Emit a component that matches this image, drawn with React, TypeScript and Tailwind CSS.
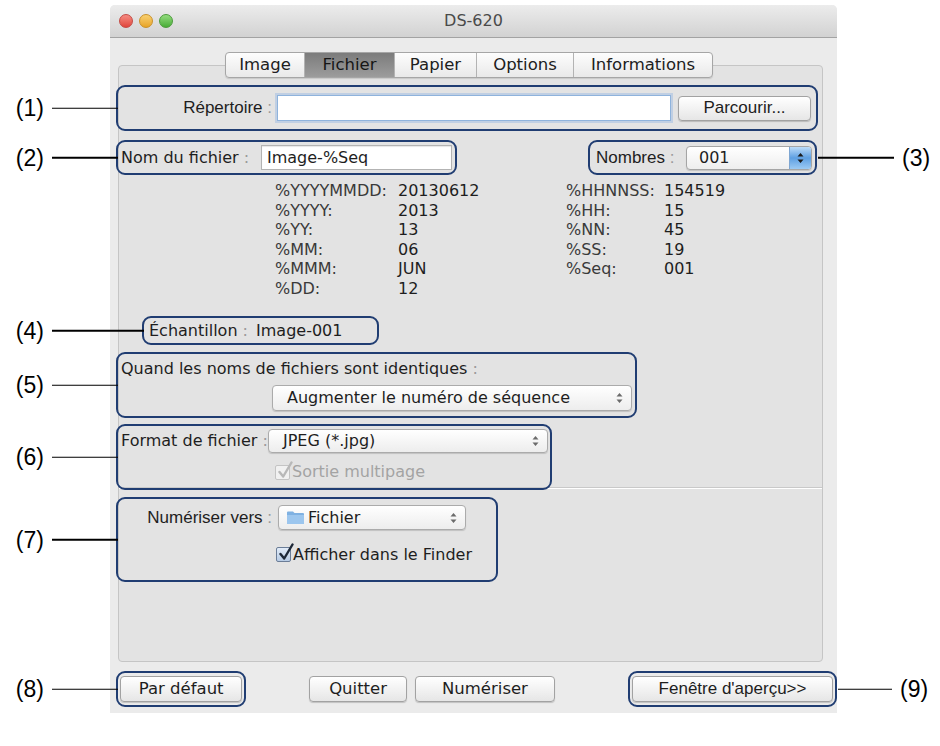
import React from 'react';

const lucida = "font-['DejaVu_Sans',sans-serif]";
const helv = "font-['Liberation_Sans',Arial,sans-serif]";

type CalloutProps = {
  n: number;
  side?: 'left' | 'right';
  lineClass: string;
  className?: string;
  children: React.ReactNode;
};

function Callout({ n, side = 'left', lineClass, className = '', children }: CalloutProps) {
  return (
    <div className={`relative z-10 rounded-[9px] border-2 border-[#203d72] ${className}`}>
      {children}
      {side === 'left' ? (
        <div className="absolute right-full top-1/2 flex -translate-y-1/2 items-center">
          <span className={`${helv} text-[23px] text-black`}>({n})</span>
          <span className={`ml-[8px] h-[1.5px] bg-black ${lineClass}`} />
        </div>
      ) : (
        <div className="absolute left-full top-1/2 flex -translate-y-1/2 items-center">
          <span className={`mr-[8px] ml-[3px] h-[1.5px] bg-black ${lineClass}`} />
          <span className={`${helv} text-[23px] text-black`}>({n})</span>
        </div>
      )}
    </div>
  );
}

const Colon = () => <span className="text-[#9a9a9a]"> :</span>;

function UpDown({ color = '#6b6b6b' }: { color?: string }) {
  return (
    <svg width="7" height="12" viewBox="0 0 7 12">
      <path d="M3.5 1 L6.5 4.6 H0.5 Z M3.5 11 L6.5 7.4 H0.5 Z" fill={color} />
    </svg>
  );
}

function PushButton({ className = '', children }: { className?: string; children: React.ReactNode }) {
  return (
    <div
      className={`flex items-center justify-center rounded-[4px] border border-[#a2a2a2] bg-gradient-to-b from-white to-[#e6e6e6] text-[#1e1e1e] shadow-[0_1px_1px_rgba(0,0,0,0.18)] ${className}`}
    >
      {children}
    </div>
  );
}

function Popup({ className = '', children }: { className?: string; children: React.ReactNode }) {
  return (
    <div
      className={`flex flex-none items-center justify-between rounded-[4px] border border-[#ababab] bg-gradient-to-b from-white to-[#ededed] pl-[14px] pr-[8px] text-[#1e1e1e] shadow-[0_1px_1px_rgba(0,0,0,0.15)] ${className}`}
    >
      <div className="flex items-center">{children}</div>
      <UpDown />
    </div>
  );
}

function CheckBox({ disabled = false }: { disabled?: boolean }) {
  return (
    <span
      className={`relative inline-block h-[15px] w-[15px] flex-none rounded-[2px] border ${
        disabled ? 'border-[#c4c4c4] bg-[#f1f1f1]' : 'border-[#6b7d97] bg-gradient-to-b from-[#e2ecf8] to-[#b7cbe5]'
      }`}
    >
      <svg className="absolute left-[1px] top-[-5px]" width="16" height="18" viewBox="0 0 16 18">
        <path
          d="M2.5 11 L6.2 15.5 L14.5 1.5"
          fill="none"
          stroke={disabled ? '#b8b8b8' : '#1d2838'}
          strokeWidth="2.4"
          strokeLinecap="round"
          strokeLinejoin="round"
        />
      </svg>
    </span>
  );
}

function FolderIcon() {
  return (
    <svg width="19" height="15" viewBox="0 0 19 15">
      <path d="M1 2.5 Q1 1.5 2 1.5 H7 L8.5 3 H17 Q18 3 18 4 V13 Q18 14 17 14 H2 Q1 14 1 13 Z" fill="#7fb1e2" />
      <path d="M1 5 H18 V13 Q18 14 17 14 H2 Q1 14 1 13 Z" fill="#9cc6ee" />
    </svg>
  );
}

const vars: [string, string, string, string][] = [
  ['%YYYYMMDD:', '20130612', '%HHNNSS:', '154519'],
  ['%YYYY:', '2013', '%HH:', '15'],
  ['%YY:', '13', '%NN:', '45'],
  ['%MM:', '06', '%SS:', '19'],
  ['%MMM:', 'JUN', '%Seq:', '001'],
  ['%DD:', '12', '', ''],
];

const tabs = [
  { label: 'Image', w: 'w-[78px]' },
  { label: 'Fichier', w: 'w-[90px]', active: true },
  { label: 'Papier', w: 'w-[82px]' },
  { label: 'Options', w: 'w-[97px]' },
  { label: 'Informations', w: 'w-[139px]' },
];

export default function App() {
  return (
    <div className={`min-h-[746px] w-[940px] bg-white pt-[5px] text-[16px] text-[#1e1e1e] ${lucida}`}>
      <div className="ml-[110px] w-[727px] rounded-t-[5px] bg-[#ebebeb] pb-[6px]">
        {/* title bar */}
        <div className="grid h-[33px] grid-cols-[1fr_auto_1fr] items-center rounded-t-[5px] border-b border-[#a3a3a3] bg-gradient-to-b from-[#ececec] to-[#d2d2d2]">
          <div className="flex items-center gap-[6px] pl-[9px]">
            <span className="h-[14px] w-[14px] rounded-full border border-[#c44a44] bg-gradient-to-b from-[#f58a82] to-[#e0443b]" />
            <span className="h-[14px] w-[14px] rounded-full border border-[#c9912a] bg-gradient-to-b from-[#f8d06e] to-[#e8a524]" />
            <span className="h-[14px] w-[14px] rounded-full border border-[#4b9a3b] bg-gradient-to-b from-[#93dc7e] to-[#48ad36]" />
          </div>
          <div className="text-[16px] text-[#4a4a4a]">DS-620</div>
          <div />
        </div>

        {/* tabs */}
        <div className="relative z-20 mt-[14px] flex pl-[115px]">
          <div className="flex h-[26px] overflow-hidden rounded-[4px] border border-[#a6a6a6] bg-gradient-to-b from-[#fdfdfd] to-[#e9e9e9] shadow-[0_1px_1px_rgba(0,0,0,0.12)]">
            {tabs.map((t, i) => (
              <div
                key={t.label}
                className={`flex items-center justify-center text-[16.5px] ${t.w} ${i > 0 ? 'border-l border-[#b3b3b3]' : ''} ${
                  t.active ? 'bg-gradient-to-b from-[#7c7c7c] to-[#9c9c9c] text-[#161616]' : 'text-[#202020]'
                }`}
              >
                {t.label}
              </div>
            ))}
          </div>
        </div>

        {/* panel */}
        <div className="-mt-[13px] ml-[8px] w-[705px] rounded-[4px] border border-[#c5c5c5] bg-[#e3e3e3] pb-[79px] pt-[19px]">
          {/* (1) */}
          <Callout n={1} lineClass="w-[66px]" className="-ml-[3px] flex h-[46px] w-[702px] items-center">
            <span className={`w-[154px] text-right ${helv} text-[17px]`}>
              Répertoire<Colon />
            </span>
            <div className="ml-[5px] h-[26px] w-[394px] border border-[#8fb3dc] bg-white shadow-[0_0_0_2px_rgba(125,170,225,0.35)]" />
            <PushButton className={`ml-[7px] h-[25px] w-[133px] ${helv} text-[17px]`}>Parcourir...</PushButton>
          </Callout>

          {/* (2) and (3) */}
          <div className="mt-[9px] flex">
            <Callout n={2} lineClass="w-[66px]" className="-ml-[3px] flex h-[35px] w-[341px] items-center justify-between pl-[3px] pr-[3px]">
              <span className="whitespace-nowrap">
                Nom du fichier<Colon />
              </span>
              <div className="flex h-[25px] w-[191px] flex-none items-center border border-[#b3b3b3] bg-white pl-[5px] shadow-[inset_0_1px_1px_rgba(0,0,0,0.1)]">
                Image-%Seq
              </div>
            </Callout>
            <Callout n={3} side="right" lineClass="w-[76px]" className="ml-[131px] flex h-[35px] w-[229px] items-center justify-between pl-[6px] pr-[3px]">
              <span className={`whitespace-nowrap ${helv} text-[17px]`}>
                Nombres<Colon />
              </span>
              <div className="flex h-[24px] w-[126px] flex-none items-center justify-between overflow-hidden rounded-[4px] border border-[#a5a5a5] bg-gradient-to-b from-white to-[#eeeeee] pl-[12px] shadow-[0_1px_1px_rgba(0,0,0,0.15)]">
                <span>001</span>
                <div className="flex h-full w-[22px] items-center justify-center border-l border-[#7ea6d2] bg-gradient-to-b from-[#bcdcf8] via-[#5d9fe2] to-[#9ccaf3]">
                  <UpDown color="#1b1b1b" />
                </div>
              </div>
            </Callout>
          </div>

          {/* variables */}
          <div className="ml-[156px] mt-[6px] grid grid-cols-[123px_168px_98px_auto] leading-[19.5px]">
            {vars.map((r) => (
              <React.Fragment key={r[0]}>
                <span className="text-[#3a3a3a]">{r[0]}</span>
                <span>{r[1]}</span>
                <span className="text-[#3a3a3a]">{r[2]}</span>
                <span>{r[3]}</span>
              </React.Fragment>
            ))}
          </div>

          {/* (4) */}
          <Callout n={4} lineClass="w-[92px]" className="ml-[23px] mt-[18px] flex h-[29px] w-[237px] items-center pl-[5px]">
            <span>
              Échantillon<Colon />
            </span>
            <span className="ml-[8px]">Image-001</span>
          </Callout>

          {/* (5) */}
          <Callout n={5} lineClass="w-[66px]" className="-ml-[3px] mt-[7px] h-[66px] w-[521px] pl-[3px] pt-[3px]">
            <div>
              Quand les noms de fichiers sont identiques<Colon />
            </div>
            <Popup className="ml-[151px] mt-[4px] h-[26px] w-[360px]">Augmenter le numéro de séquence</Popup>
          </Callout>

          {/* (6) */}
          <Callout n={6} lineClass="w-[66px]" className="-ml-[3px] mt-[6px] h-[66px] w-[436px] pl-[3px] pr-[2px] pt-[3px]">
            <div className="flex items-center justify-between">
              <span className="whitespace-nowrap">
                Format de fichier<Colon />
              </span>
              <Popup className="h-[24px] w-[280px]">JPEG (*.jpg)</Popup>
            </div>
            <div className="ml-[154px] mt-[7px] flex items-center gap-[2px] text-[#a3a3a3]">
              <CheckBox disabled />
              <span>Sortie multipage</span>
            </div>
          </Callout>

          <div className="-mt-[3px] border-b border-t border-b-white border-t-[#c9c9c9]" />

          {/* (7) */}
          <Callout n={7} lineClass="w-[66px]" className="-ml-[3px] mt-[8px] h-[85px] w-[382px] pt-[6px]">
            <div className="flex items-center">
              <span className={`w-[154px] whitespace-nowrap text-right ${helv} text-[17px]`}>
                Numériser vers<Colon />
              </span>
              <Popup className="ml-[6px] h-[25px] w-[188px] !pl-[7px]">
                <FolderIcon />
                <span className="ml-[3px]">Fichier</span>
              </Popup>
            </div>
            <div className="ml-[158px] mt-[12px] flex items-center gap-[2px]">
              <CheckBox />
              <span>Afficher dans le Finder</span>
            </div>
          </Callout>
        </div>

        {/* bottom buttons */}
        <div className="mt-[9px] flex items-center">
          <Callout n={8} lineClass="w-[66px]" className="ml-[6px] flex h-[36px] w-[131px] items-center justify-center">
            <PushButton className="h-[26px] w-[122px] text-[16.5px]">Par défaut</PushButton>
          </Callout>
          <PushButton className="ml-[63px] h-[26px] w-[98px] text-[16.5px]">Quitter</PushButton>
          <PushButton className="ml-[8px] h-[26px] w-[141px] text-[16.5px]">Numériser</PushButton>
          <Callout n={9} side="right" lineClass="w-[54px]" className="ml-[73px] flex h-[36px] w-[210px] items-center justify-center">
            <PushButton className={`h-[26px] w-[201px] ${helv} text-[17px]`}>Fenêtre d'aperçu&gt;&gt;</PushButton>
          </Callout>
        </div>
      </div>
    </div>
  );
}
